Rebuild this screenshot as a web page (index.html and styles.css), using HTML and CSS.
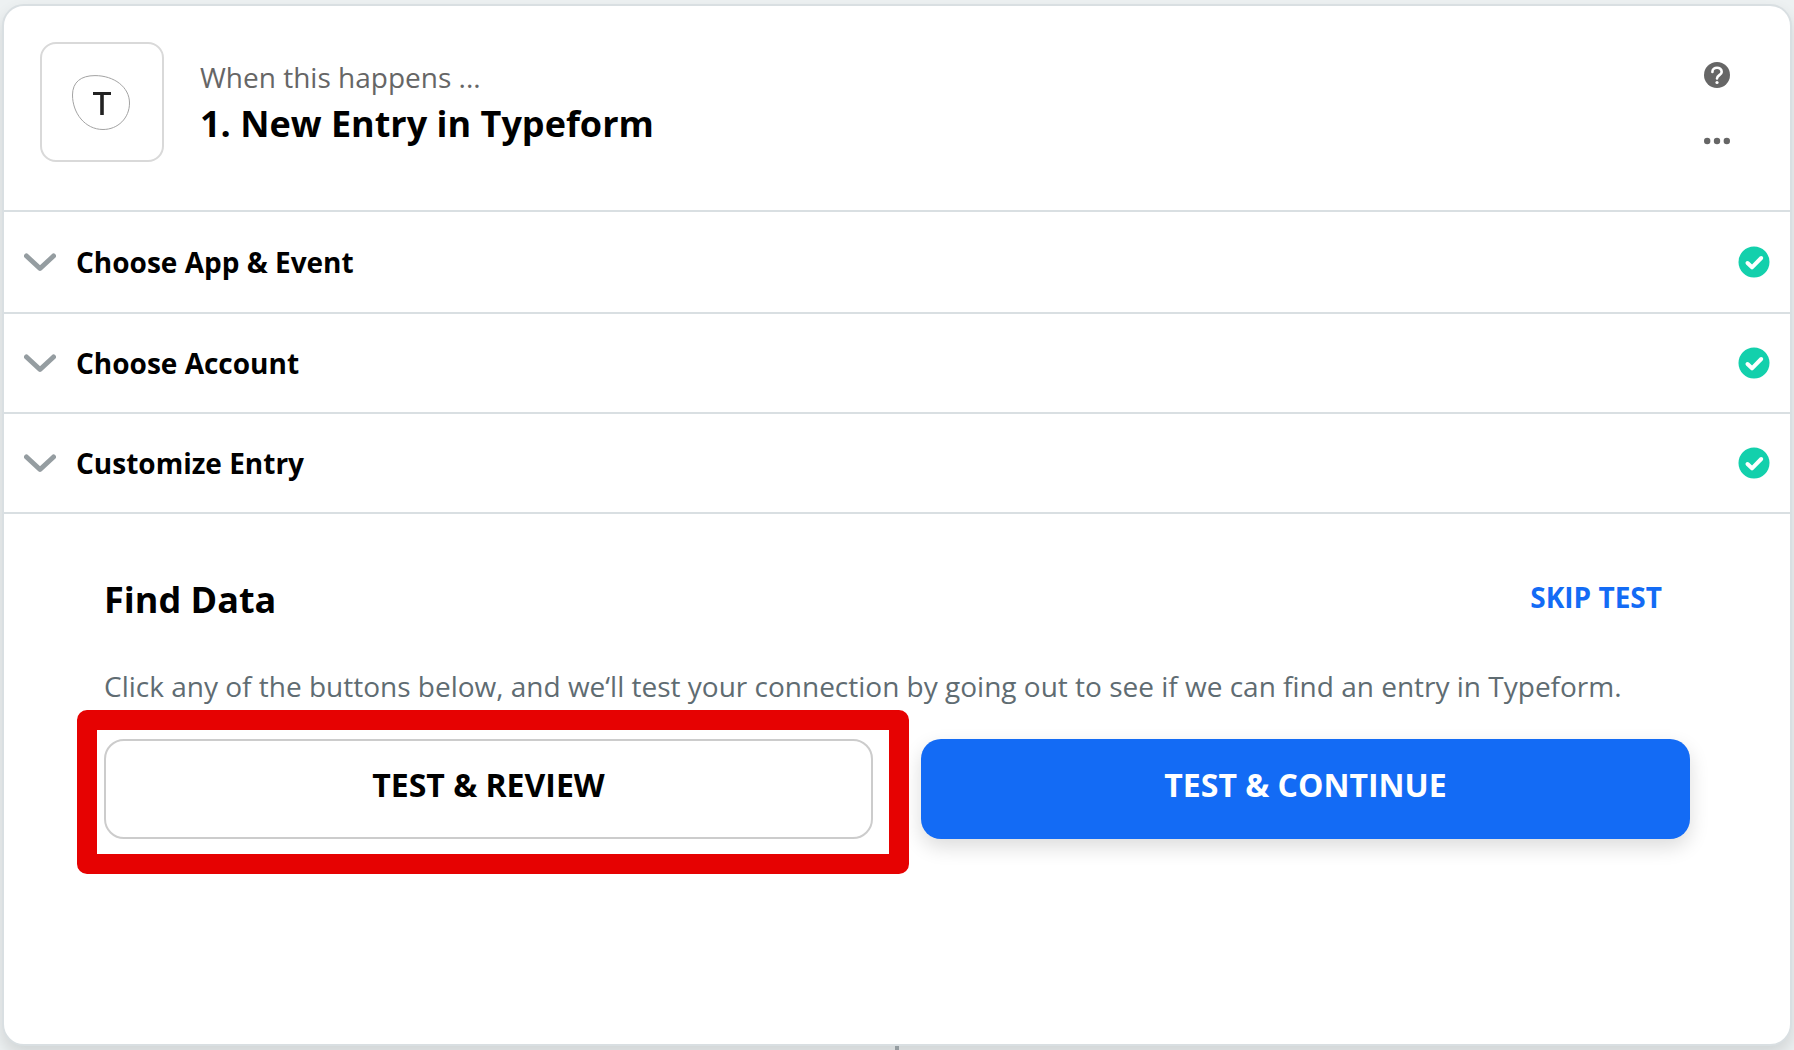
FILE: index.html
```html
<!DOCTYPE html>
<html lang="en">
<head>
<meta charset="utf-8">
<title>New Entry in Typeform</title>
<meta name="viewport" content="width=device-width, initial-scale=1">
<link rel="stylesheet" href="styles.css">
</head>
<body>
<main class="step">
  <header class="step-header">
    <div class="app-icon">
      <svg width="60" height="58" viewBox="1 -1 60 58" role="img" aria-label="Typeform">
        <path d="M1.5 21C1.5 8 10 1.6 24 1.6C43 1.6 58.5 13 58.5 29C58.5 44 47 55.5 32 55.5C14 55.5 1.5 39 1.5 21Z" fill="#fff" stroke="#a3a3a3"/>
        <path d="M22 18H40V21H32.800V41H29.200V21H22Z" fill="#222"/>
      </svg>
    </div>
    <div class="step-heading">
      <p class="step-kicker">When this happens ...</p>
      <h1 class="step-title">1. New Entry in Typeform</h1>
    </div>
    <div class="step-tools">
      <button class="tool" type="button" aria-label="Help">
        <svg width="26" height="26" viewBox="0 0 26 26">
          <circle cx="13" cy="13" r="13" fill="#666"/>
          <path d="M8.400 9.900C8.400 4.400 17.700 4.300 17.700 9.900C17.700 13 13 13.300 13 16.400" fill="none" stroke="#fff" stroke-width="2.600" stroke-linecap="round"/>
          <circle cx="13" cy="20.500" r="1.600" fill="#fff"/>
        </svg>
      </button>
      <button class="tool" type="button" aria-label="More options">
        <svg width="26" height="26" viewBox="0 0 26 26" fill="#666">
          <circle cx="3.200" cy="13" r="3.200"/><circle cx="13" cy="13" r="3.200"/><circle cx="22.800" cy="13" r="3.200"/>
        </svg>
      </button>
    </div>
  </header>

  <button class="section-row" type="button">
    <svg class="chevron" width="32" height="20" viewBox="0 0 32 20"><path d="M2.500 4L16 16.500L29.500 4"/></svg>
    <span class="section-name">Choose App &amp; Event</span>
    <svg class="done" width="32" height="32" viewBox="0 0 32 32"><circle cx="16" cy="16" r="15.500"/><path d="M9.500 17L14 21.300L23.200 12"/></svg>
  </button>
  <button class="section-row" type="button">
    <svg class="chevron" width="32" height="20" viewBox="0 0 32 20"><path d="M2.500 4L16 16.500L29.500 4"/></svg>
    <span class="section-name">Choose Account</span>
    <svg class="done" width="32" height="32" viewBox="0 0 32 32"><circle cx="16" cy="16" r="15.500"/><path d="M9.500 17L14 21.300L23.200 12"/></svg>
  </button>
  <button class="section-row" type="button">
    <svg class="chevron" width="32" height="20" viewBox="0 0 32 20"><path d="M2.500 4L16 16.500L29.500 4"/></svg>
    <span class="section-name">Customize Entry</span>
    <svg class="done" width="32" height="32" viewBox="0 0 32 32"><circle cx="16" cy="16" r="15.500"/><path d="M9.500 17L14 21.300L23.200 12"/></svg>
  </button>

  <section class="find-data">
    <div class="find-head">
      <h2 class="find-title">Find Data</h2>
      <button class="skip" type="button">SKIP TEST</button>
    </div>
    <p class="find-text">Click any of the buttons below, and we‘ll test your connection by going out to see if we can find an entry in Typeform.</p>
    <div class="actions">
      <div class="highlighted">
        <button class="action action-outline" type="button">TEST &amp; REVIEW</button>
      </div>
      <button class="action action-primary" type="button">TEST &amp; CONTINUE</button>
    </div>
  </section>
</main>
<div class="connector"></div>
</body>
</html>
```
FILE: styles.css
```css
* {
  box-sizing: border-box;
}

body {
  margin: 0;
  padding: 4px 2px 0;
  min-height: 100vh;
  display: flex;
  flex-direction: column;
  background: #edf1f2;
  font-family: "Open Sans", "Noto Sans", sans-serif;
  color: #000;
}

h1, h2, p {
  margin: 0;
}

button {
  margin: 0;
  padding: 0;
  border: 0;
  background: none;
  font: inherit;
  color: inherit;
  cursor: pointer;
}

svg {
  display: block;
  flex: none;
}

.step {
  flex: 1;
  background: #fff;
  border: 2px solid #d9dfe2;
  border-radius: 22px;
  box-shadow: 0 8px 16px rgba(0, 0, 0, 0.12);
}

.step-header {
  display: flex;
  align-items: flex-start;
  min-height: 206px;
  padding: 36px 60px 36px 36px;
  border-bottom: 2px solid #d9dfe2;
}

.app-icon {
  display: flex;
  align-items: center;
  justify-content: center;
  width: 124px;
  height: 120px;
  border: 2px solid #d9d9d9;
  border-radius: 16px;
}

.step-heading {
  flex: 1;
  padding: 14px 0 0 36px;
}

.step-kicker {
  font-size: 28px;
  line-height: 42px;
  color: #666;
}

.step-title {
  font-size: 36px;
  line-height: 52px;
  font-weight: 700;
}

.step-tools {
  display: flex;
  flex-direction: column;
  gap: 40px;
  padding-top: 20px;
}

.section-row {
  display: flex;
  align-items: center;
  gap: 20px;
  width: 100%;
  height: 100px;
  padding: 0 20px;
  border-bottom: 2px solid #d9dfe2;
  text-align: left;
}

.step-header + .section-row {
  height: 102px;
}

.section-name {
  flex: 1;
  font-size: 28px;
  line-height: 40px;
  font-weight: 700;
}

.chevron {
  fill: none;
  stroke: #959da1;
  stroke-width: 5;
  stroke-linecap: round;
  stroke-linejoin: round;
}

.done {
  fill: #13d0ac;
}

.done path {
  fill: none;
  stroke: #fff;
  stroke-width: 4;
  stroke-linecap: round;
  stroke-linejoin: round;
}

.find-data {
  padding: 60px 100px;
}

.find-head {
  display: flex;
  align-items: flex-start;
  justify-content: space-between;
  padding-right: 28px;
}

.find-title {
  font-size: 36px;
  line-height: 52px;
  font-weight: 700;
}

.skip {
  font-size: 28px;
  line-height: 46px;
  font-weight: 700;
  color: #136bf5;
}

.find-text {
  padding-top: 40px;
  font-size: 28px;
  line-height: 40px;
  color: #5f6c72;
}

.actions {
  display: grid;
  grid-template-columns: 1fr 1fr;
  gap: 48px;
  padding-top: 33px;
}

.action {
  width: 100%;
  height: 100px;
  padding-bottom: 8px;
  border-radius: 20px;
  font-size: 32px;
  line-height: 44px;
  font-weight: 700;
}

.action-outline {
  border: 2px solid #ccc;
}

.action-primary {
  background: #136bf5;
  color: #fff;
  box-shadow: 0 8px 20px rgba(0, 0, 0, 0.14);
}

.highlighted {
  position: relative;
}

/* Callout frame drawn over the recommended action */
.highlighted::after {
  content: "";
  position: absolute;
  inset: -29px -36px -35px -27px;
  border: 20px solid #e60202;
  border-radius: 10px;
  pointer-events: none;
}

.connector {
  width: 4px;
  height: 4px;
  margin: 0 auto;
  background: #959da1;
  position: relative;
}
```
